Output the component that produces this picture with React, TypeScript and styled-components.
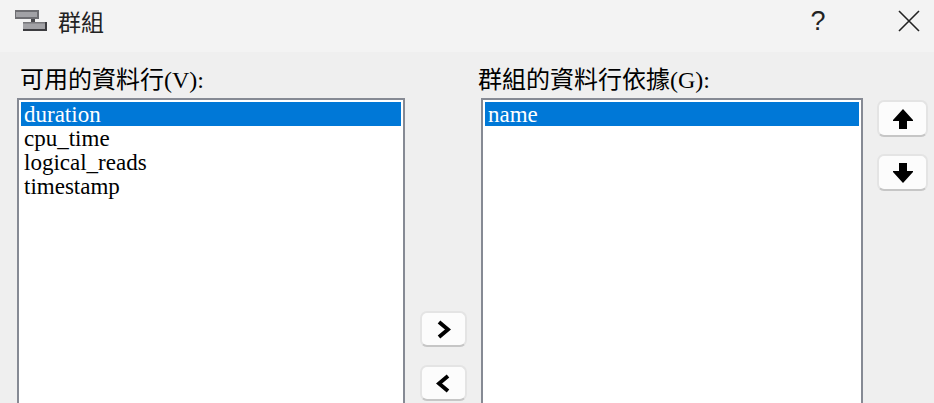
import React from "react";
import styled, { createGlobalStyle } from "styled-components";

const Global = createGlobalStyle`
  html, body { margin: 0; padding: 0; background: #efefef; overflow: hidden; }
`;

const Dialog = styled.div`
  width: 934px;
  height: 403px;
  overflow: hidden;
  background: #efefef;
  font-family: "Liberation Serif", "Noto Sans CJK TC", serif;
  color: #111;
`;

const TitleBar = styled.header`
  height: 52px;
  background: #f3f3f3;
  display: flex;
  align-items: center;
  padding: 0 3px 10px 15px;
  box-sizing: border-box;
`;

const TitleText = styled.span`
  margin-left: 11px;
  font-family: "Noto Sans CJK TC", sans-serif;
  font-size: 23px;
  line-height: 30px;
  color: #222;
  flex: 1;
`;

const TitleControl = styled.button`
  width: 44px;
  border: 0;
  padding: 0;
  background: transparent;
  display: flex;
  justify-content: center;
  align-items: center;
  color: #222;
  & + & { margin-left: 47px; }
`;

const HelpMark = styled.span`
  font-family: "Liberation Sans", sans-serif;
  font-size: 27px;
  line-height: 30px;
`;

const Body = styled.main`
  display: grid;
  grid-template-columns: 388px 76px 382px 51px;
  padding: 0 0 0 17px;
`;

const ListColumn = styled.section`
  display: flex;
  flex-direction: column;
`;

const FieldLabel = styled.label<{ $shift: number }>`
  height: 46px;
  padding-top: 13px;
  margin-left: ${(p) => p.$shift}px;
  box-sizing: border-box;
  font-size: 24px;
  line-height: 30px;
  white-space: nowrap;
  color: #000;
`;

const ListBox = styled.ul`
  margin: 0;
  padding: 2px;
  list-style: none;
  height: 400px;
  background: #fff;
  border: 2px solid #868a94;
  box-sizing: border-box;
`;

const ListItem = styled.li<{ $selected?: boolean }>`
  height: 24px;
  padding-left: 3px;
  font-size: 23px;
  line-height: 26px;
  background: ${(p) => (p.$selected ? "#0078d7" : "transparent")};
  color: ${(p) => (p.$selected ? "#fff" : "#000")};
`;

const TransferColumn = styled.div`
  display: flex;
  flex-direction: column;
  align-items: flex-start;
  gap: 18px;
  padding: 259px 0 0 15px;
`;

const OrderColumn = styled.div`
  display: flex;
  flex-direction: column;
  gap: 17px;
  padding: 48px 0 0 14px;
`;

const ToolButton = styled.button<{ $wide?: boolean }>`
  width: ${(p) => (p.$wide ? 51 : 47)}px;
  height: ${(p) => (p.$wide ? 37 : 36)}px;
  flex: none;
  padding: 0;
  display: flex;
  align-items: center;
  justify-content: center;
  background: #fcfcfc;
  border: 2px solid #e4e4e4;
  border-bottom-color: #c6c6c6;
  border-radius: 7px;
  box-sizing: border-box;
`;

const TitleIcon = () => (
  <svg width="32" height="22" viewBox="0 0 32 22">
    <rect x="0" y="0" width="24" height="9" fill="#6e6e72" />
    <rect x="1" y="2" width="21" height="5" fill="#a2a2a6" />
    <rect x="16" y="9" width="4" height="4" fill="#48484c" />
    <rect x="8" y="12" width="24" height="9" fill="#3c3c40" />
    <rect x="8" y="12" width="22" height="7" fill="#a2a2a6" />
    <rect x="8" y="12" width="22" height="1.5" fill="#77777b" />
  </svg>
);

const CloseIcon = () => (
  <svg width="22" height="22" viewBox="0 0 22 22">
    <path d="M1 1 L21 21 M21 1 L1 21" stroke="#222" strokeWidth="1.6" fill="none" />
  </svg>
);

const Chevron = ({ dir }: { dir: "left" | "right" }) => (
  <svg width="15" height="19" viewBox="0 0 15 19">
    <path
      d={dir === "right" ? "M3 2 L12 9.5 L3 17" : "M12 2 L3 9.5 L12 17"}
      fill="none"
      stroke="#000"
      strokeWidth="4"
    />
  </svg>
);

const Arrow = ({ dir }: { dir: "up" | "down" }) => (
  <svg width="22" height="22" viewBox="0 0 22 22">
    <path
      d={
        dir === "up"
          ? "M11 1 L21 12 V13 H15 V21 H7 V13 H1 V12 Z"
          : "M11 21 L21 10 V9 H15 V1 H7 V9 H1 V10 Z"
      }
      fill="#000"
    />
  </svg>
);

export default function App() {
  return (
    <Dialog>
      <Global />
      <TitleBar>
        <TitleIcon />
        <TitleText>群組</TitleText>
        <TitleControl>
          <HelpMark>?</HelpMark>
        </TitleControl>
        <TitleControl>
          <CloseIcon />
        </TitleControl>
      </TitleBar>
      <Body>
        <ListColumn>
          <FieldLabel $shift={3}>可用的資料行(V):</FieldLabel>
          <ListBox>
            <ListItem $selected>duration</ListItem>
            <ListItem>cpu_time</ListItem>
            <ListItem>logical_reads</ListItem>
            <ListItem>timestamp</ListItem>
          </ListBox>
        </ListColumn>
        <TransferColumn>
          <ToolButton>
            <Chevron dir="right" />
          </ToolButton>
          <ToolButton>
            <Chevron dir="left" />
          </ToolButton>
        </TransferColumn>
        <ListColumn>
          <FieldLabel $shift={-3}>群組的資料行依據(G):</FieldLabel>
          <ListBox>
            <ListItem $selected>name</ListItem>
          </ListBox>
        </ListColumn>
        <OrderColumn>
          <ToolButton $wide>
            <Arrow dir="up" />
          </ToolButton>
          <ToolButton $wide>
            <Arrow dir="down" />
          </ToolButton>
        </OrderColumn>
      </Body>
    </Dialog>
  );
}
